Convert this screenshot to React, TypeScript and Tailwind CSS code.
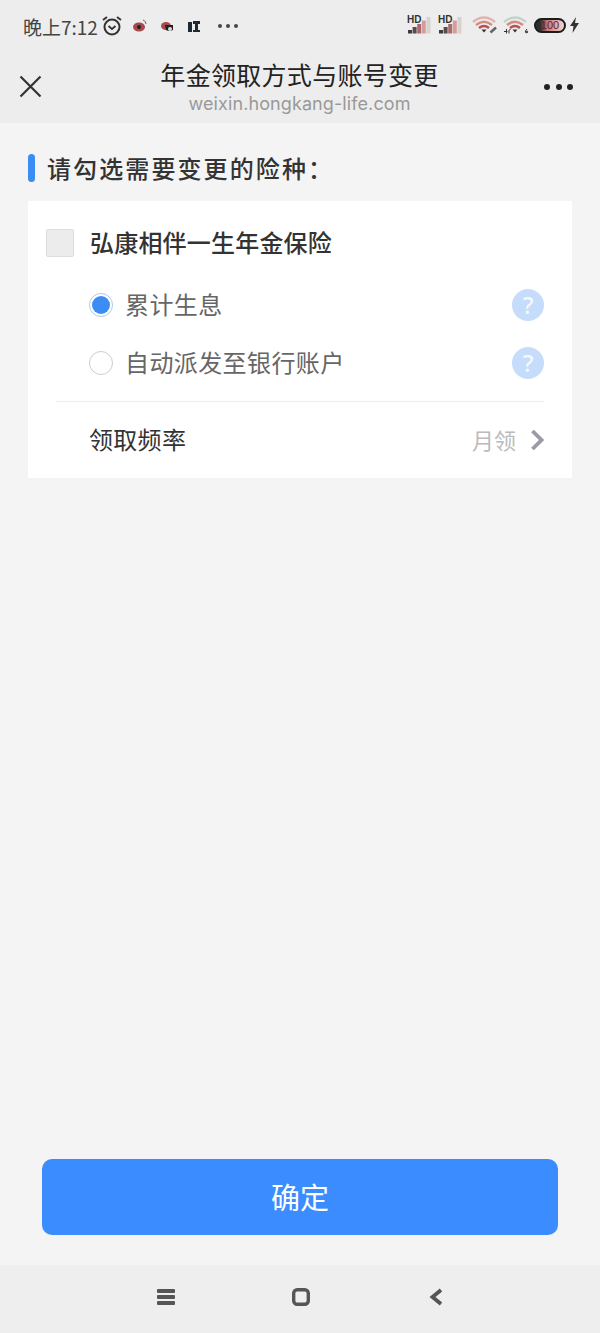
import React from "react";

const cjk = { fontFamily: '"Noto Sans CJK SC", "Noto Sans", sans-serif' };

function Signal() {
  return (
    <div className="relative w-[24px] h-[18px]">
      <svg width="24" height="18" viewBox="0 0 24 18" className="absolute left-0 top-0">
        <rect x="1" y="14" width="4" height="3.5" fill="#3c3c3c" />
        <rect x="5.6" y="11" width="4" height="6.5" fill="#5a4a4a" />
        <rect x="10.2" y="8" width="4" height="9.5" fill="#a86a6a" />
        <rect x="14.8" y="4.5" width="4" height="13" fill="#d69c9a" />
        <rect x="19.4" y="1" width="4" height="16.5" fill="#d8d2ce" />
      </svg>
      <span className="absolute left-0 top-[-1px] text-[10px] leading-[10px] font-bold text-[#333]" style={{ fontFamily: '"Liberation Sans", sans-serif' }}>HD</span>
    </div>
  );
}

function Wifi({ variant }: { variant: "link" | "six" }) {
  return (
    <svg width="26" height="18" viewBox="0 0 26 18">
      <path d="M1 6 Q12 -3 23 6" stroke={variant === "six" ? "#c4d2ca" : "#e0b4ae"} strokeWidth="2.4" fill="none" />
      <path d="M4 9 Q12 2.5 20 9" stroke="#d68a84" strokeWidth="2.4" fill="none" />
      <path d="M7 12 Q12 8 17 12" stroke="#b9504c" strokeWidth="2.4" fill="none" />
      <path d="M9.5 13.5 L14.5 13.5 L12 16.5 Z" fill="#333" />
      {variant === "link" ? (
        <path d="M18.5 16.5 L24 11.5" stroke="#666" strokeWidth="2.6" fill="none" />
      ) : (
        <>
          <path d="M1 15.5 h3.5 M3.5 13 v4.5 M6 17.5 v-3 q0 -1 1.5 -1" stroke="#333" strokeWidth="1" fill="none" />
          <path d="M24 13 q-2 1.5 -1.5 3.5 q1.8 1 2.5 -.6 q-.6 -1.4 -2.2 -.4" stroke="#333" strokeWidth="1" fill="none" />
        </>
      )}
    </svg>
  );
}

function Help() {
  return (
    <div className="w-[32px] h-[32px] rounded-full bg-[#c5dcfb] flex items-center justify-center text-[#f4f8ff] text-[24px] leading-none font-medium" style={{ fontFamily: '"Noto Sans", sans-serif' }}>
      ?
    </div>
  );
}

export default function App() {
  return (
    <div className="w-[600px] h-[1333px] flex flex-col bg-[#f4f4f4] overflow-hidden" style={cjk}>
      <div className="bg-[#ededed] h-[123px] shrink-0 flex flex-col">
        <div className="h-[52px] flex items-center pl-[23px] pr-[21px]">
          <span className="text-[19px] leading-none text-[#444] whitespace-nowrap">晚上7:12</span>
          <svg width="22" height="22" viewBox="0 0 22 22" className="ml-[3px]" fill="none" stroke="#333">
            <circle cx="11" cy="12" r="7.5" strokeWidth="2" />
            <path d="M7.5 11 L11 14 L14.5 11" strokeWidth="1.8" />
            <path d="M2 5 L6 2 M20 5 L16 2" strokeWidth="2" />
          </svg>
          <svg width="16" height="14" viewBox="0 0 16 14" className="ml-[9px]">
            <ellipse cx="7" cy="8" rx="6" ry="4.5" fill="#a8484a" />
            <circle cx="7" cy="8" r="2" fill="#222" />
            <path d="M11 1 Q14 2 14 5" stroke="#666" fill="none" />
          </svg>
          <svg width="16" height="14" viewBox="0 0 16 14" className="ml-[12px]">
            <ellipse cx="6" cy="7" rx="5" ry="4" fill="#a8484a" />
            <path d="M5 6 L13 6 L13 11 Q9 13 6 11 Z" fill="#222" />
            <circle cx="10" cy="10" r="2" fill="#ddd" />
          </svg>
          <svg width="14" height="14" viewBox="0 0 14 14" className="ml-[11px]" fill="#1f2a30">
            <rect x="1" y="3" width="4" height="10" />
            <rect x="6" y="2" width="7" height="3" />
            <rect x="8" y="5" width="3" height="6" />
            <rect x="6" y="11" width="7" height="2" />
          </svg>
          <div className="ml-[17px] flex gap-[4px]">
            <span className="w-[4px] h-[4px] rounded-full bg-[#444]" />
            <span className="w-[4px] h-[4px] rounded-full bg-[#444]" />
            <span className="w-[4px] h-[4px] rounded-full bg-[#444]" />
          </div>
          <div className="ml-auto flex items-center pb-[2px]">
            <Signal />
            <div className="ml-[7px]"><Signal /></div>
            <div className="ml-[10px]"><Wifi variant="link" /></div>
            <div className="ml-[5px]"><Wifi variant="six" /></div>
            <div className="ml-[5px] w-[32px] h-[15px] rounded-full border-[2px] border-[#1c1c1c] bg-linear-to-r from-[#2e2e2e] from-15% via-[#c47a78] via-40% to-[#efd6d3] overflow-hidden flex items-center justify-center text-[11px] leading-none text-[#6a2023]" style={{ fontFamily: '"Liberation Sans", sans-serif' }}>
              100
            </div>
            <svg width="9" height="16" viewBox="0 0 9 16" className="ml-[4px]" fill="#333">
              <path d="M6 0 L0 9 L3.5 9 L2.5 16 L9 6 L5 6 Z" />
            </svg>
          </div>
        </div>
        <div className="h-[71px] flex items-start px-[19px]">
          <svg width="23" height="23" viewBox="0 0 23 23" className="mt-[23px] shrink-0" stroke="#333" strokeWidth="2.2" fill="none">
            <path d="M1.5 1.5 L21.5 21.5 M21.5 1.5 L1.5 21.5" />
          </svg>
          <div className="flex-1 flex flex-col items-center pl-[13px]">
            <div className="text-[25px] leading-[34px] mt-[5px] text-[#222] tracking-[0.3px] whitespace-nowrap">年金领取方式与账号变更</div>
            <div className="text-[18px] leading-[26px] text-[#999] tracking-[0.1px] whitespace-nowrap" style={{ fontFamily: 'Inter, sans-serif' }}>weixin.hongkang-life.com</div>
          </div>
          <div className="mt-[32px] mr-[8px] flex gap-[5.5px] shrink-0">
            <span className="w-[6px] h-[6px] rounded-full bg-[#222]" />
            <span className="w-[6px] h-[6px] rounded-full bg-[#222]" />
            <span className="w-[6px] h-[6px] rounded-full bg-[#222]" />
          </div>
        </div>
      </div>

      <div className="flex-1 flex flex-col px-[28px]">
        <div className="flex items-center h-[78px] pt-[16px] pb-[4px] shrink-0">
          <span className="w-[7px] h-[28px] rounded-full bg-[#3b8df3]" />
          <span className="ml-[12px] text-[24px] leading-none font-medium text-[#333] tracking-[2.1px] whitespace-nowrap">请勾选需要变更的险种：</span>
        </div>
        <div className="bg-white h-[277px] shrink-0 px-[18px] pt-[28px] flex flex-col">
          <div className="flex items-center h-[28px]">
            <span className="w-[28px] h-[28px] rounded-[2px] bg-[#ececec] border border-[#dddddd]" />
            <span className="ml-[16px] pb-[2px] text-[24px] leading-none font-medium text-[#333] tracking-[0.2px] whitespace-nowrap">弘康相伴一生年金保险</span>
          </div>
          <div className="ml-[43px] mt-[32px] mr-[10px] flex items-center h-[32px]">
            <span className="w-[24px] h-[24px] rounded-full border border-[#a9c9f2] flex items-center justify-center">
              <span className="w-[18px] h-[18px] rounded-full bg-[#3b8df3]" />
            </span>
            <span className="ml-[12px] pb-[2px] text-[24px] leading-none text-[#666] tracking-[0.4px] whitespace-nowrap">累计生息</span>
            <div className="ml-auto"><Help /></div>
          </div>
          <div className="ml-[43px] mt-[26px] mr-[10px] flex items-center h-[32px]">
            <span className="w-[24px] h-[24px] rounded-full border border-[#cccccc] bg-white" />
            <span className="ml-[12px] pb-[2px] text-[24px] leading-none text-[#666] tracking-[0.4px] whitespace-nowrap">自动派发至银行账户</span>
            <div className="ml-auto"><Help /></div>
          </div>
          <div className="ml-[10px] mr-[10px] mt-[22px] h-px bg-[#ececec]" />
          <div className="ml-[43px] mr-[10px] flex items-center h-[76px]">
            <span className="pb-[2px] text-[24px] leading-none text-[#333] tracking-[0.3px] whitespace-nowrap">领取频率</span>
            <span className="ml-auto pb-[2px] text-[22px] leading-none text-[#bbbbbb] whitespace-nowrap">月领</span>
            <svg width="14" height="22" viewBox="0 0 14 22" className="ml-[14px]" fill="none" stroke="#9a9aa4" strokeWidth="3.8">
              <path d="M2.5 2 L11.5 11 L2.5 20" />
            </svg>
          </div>
        </div>
        <div className="flex-1" />
        <div className="mx-[14px] mb-[30px] h-[76px] rounded-[10px] bg-[#3a8cff] flex items-center justify-center text-white text-[29px] leading-none pb-[2px] shrink-0">
          确定
        </div>
      </div>

      <div className="h-[68px] bg-[#eeeeee] shrink-0 flex items-center pb-[4px] pl-[157px]">
        <svg width="18" height="16" viewBox="0 0 18 16" fill="#555">
          <rect x="0" y="0" width="18" height="4" rx="1" />
          <rect x="0" y="6" width="18" height="4" rx="1" />
          <rect x="0" y="12" width="18" height="4" rx="1" />
        </svg>
        <svg width="18" height="18" viewBox="0 0 18 18" className="ml-[117px]" fill="none" stroke="#555" strokeWidth="3.4">
          <rect x="1.7" y="1.7" width="14.6" height="14.6" rx="3.5" />
        </svg>
        <svg width="14" height="18" viewBox="0 0 14 18" className="ml-[119px]" fill="none" stroke="#555" strokeWidth="3.8">
          <path d="M12 2 L3.5 9 L12 16" />
        </svg>
      </div>
    </div>
  );
}
